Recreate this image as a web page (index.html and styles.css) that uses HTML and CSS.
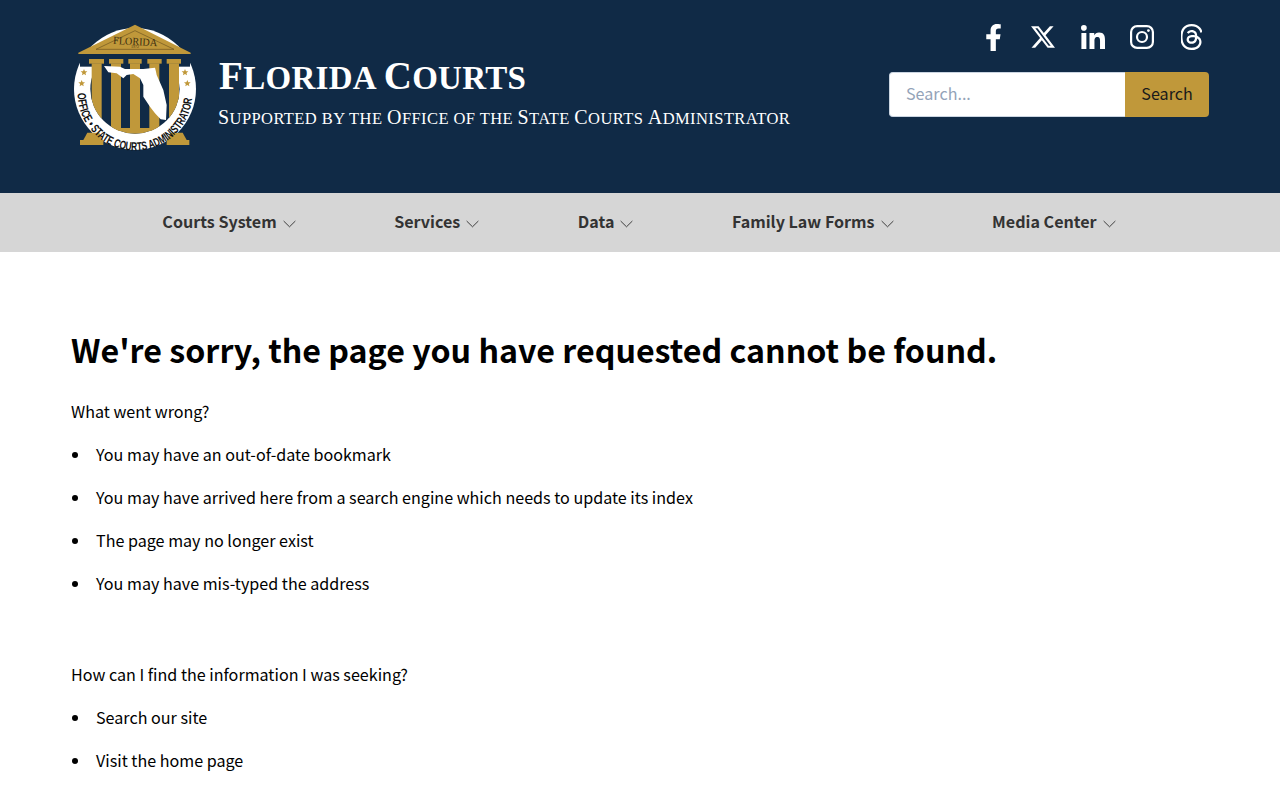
FILE: index.html
```html
<!DOCTYPE html>
<html lang="en">
<head>
  <meta charset="UTF-8" />
  <meta name="viewport" content="width=device-width, initial-scale=1.0" />
  <title>Florida Courts - Page Not Found</title>
  <link rel="stylesheet" href="styles.css">
</head>
<body>
  <header class="site-header">
    <div class="brand">
      <svg class="seal" viewBox="0 0 450 450" aria-hidden="true">
        <defs>
          <path id="seal-arc" d="M53 250 A172 172 0 0 0 397 250" />
          <clipPath id="seal-inner"><circle cx="225" cy="237" r="134" /><rect x="60" y="100" width="330" height="137" /></clipPath>
          <polygon id="seal-star" points="0,-10 2.900,-3.200 10,-3 4.500,1.700 6.200,9 0,5 -6.200,9 -4.500,1.700 -10,-3 -2.900,-3.200" />
        </defs>
        <circle cx="225" cy="237" r="183" fill="#fff" />
        <circle cx="225" cy="237" r="134" fill="#102a46" />
        <rect x="60" y="130" width="330" height="40" fill="#102a46" />
        <g fill="#c0983a">
          <polygon points="225,44 392,128 392,132 55,132 55,128" />
          <rect x="87" y="147" width="45" height="14" />
          <rect x="147" y="147" width="43" height="14" />
          <rect x="205" y="147" width="40" height="14" />
          <rect x="262" y="147" width="43" height="14" />
          <rect x="320" y="147" width="43" height="14" />
          <g clip-path="url(#seal-inner)">
            <rect x="95" y="160" width="30" height="170" />
            <rect x="153" y="160" width="30" height="205" />
            <rect x="210" y="160" width="30" height="210" />
            <rect x="268" y="160" width="30" height="205" />
            <rect x="327" y="160" width="30" height="170" />
            <rect x="120" y="354" width="210" height="20" />
          </g>
          <polygon points="82,368 118,368 128,390 70,390" />
          <polygon points="332,368 368,368 380,390 322,390" />
          <rect x="60" y="390" width="70" height="15" />
          <rect x="320" y="390" width="68" height="15" />
          <use href="#seal-star" x="72" y="187" />
          <use href="#seal-star" x="65" y="220" />
          <use href="#seal-star" x="375" y="187" />
          <use href="#seal-star" x="382" y="220" />
        </g>
        <polygon points="225,62 342,118 108,118" fill="none" stroke="#6b5320" stroke-width="2" />
        <text class="seal-name" x="225" y="105" text-anchor="middle" textLength="132" lengthAdjust="spacingAndGlyphs" transform="rotate(3 225 105)">FLORIDA</text>
        <text class="seal-year" x="225" y="115" text-anchor="middle">1972</text>
        <polygon points="132,168 180,170 195,177 250,177 285,173 288,185 290,195 310,240 320,285 318,330 302,328 285,310 270,290 250,260 250,225 240,205 220,192 200,195 190,205 170,190 145,187" fill="#fff" />
        <text class="seal-ring" textLength="525" lengthAdjust="spacingAndGlyphs"><textPath href="#seal-arc">OFFICE • STATE COURTS ADMINISTRATOR</textPath></text>
      </svg>
      <div class="brand-text">
        <div class="brand-title"><span>F</span>lorida <span>C</span>ourts</div>
        <div class="brand-sub"><span>S</span>upported by the <span>O</span>ffice of the <span>S</span>tate <span>C</span>ourts <span>A</span>dministrator</div>
      </div>
    </div>
    <div class="header-right">
      <div class="social">
        <a href="#" aria-label="Facebook">
          <svg class="ico-f" viewBox="0 0 320 512"><path d="M279.140 288l14.220-92.660h-88.910v-60.130c0-25.350 12.420-50.060 52.240-50.060h40.420V6.260S260.430 0 225.360 0c-73.220 0-121.080 44.380-121.080 124.720v70.620H22.890V288h81.390v224h100.170V288z" /></svg>
        </a>
        <a href="#" aria-label="X">
          <svg class="ico-x" viewBox="26 48 461 416"><path d="M389.200 48h70.600L305.600 224.200 487 464H345L233.700 318.600 106.500 464H35.800l164.900-188.500L26.800 48h145.600l100.500 132.900L389.200 48zm-24.800 373.800h39.100L151.100 88h-42L364.400 421.800z" /></svg>
        </a>
        <a href="#" aria-label="LinkedIn">
          <svg class="ico-in" viewBox="0 0 448 448"><path d="M100.280 448H7.400V148.900h92.880zM53.790 108.100C24.090 108.100 0 83.500 0 53.800a53.790 53.790 0 0 1 107.580 0c0 29.700-24.100 54.300-53.790 54.300zM447.900 448h-92.680V302.400c0-34.700-.7-79.200-48.290-79.200-48.290 0-55.690 37.700-55.690 76.700V448h-92.780V148.900h89.080v40.800h1.300c12.400-23.500 42.690-48.300 87.880-48.300 94 0 111.280 61.900 111.280 142.300V448z" /></svg>
        </a>
        <a href="#" aria-label="Instagram">
          <svg class="ico-ig" viewBox="0 0 24 24"><rect x="1.100" y="1.100" width="21.800" height="21.800" rx="6" /><circle cx="12" cy="12" r="5" /><circle class="dot" cx="18.400" cy="5.600" r="1.400" /></svg>
        </a>
        <a href="#" aria-label="Threads">
          <svg class="ico-th" viewBox="32 16 385 480"><path d="M331.500 235.700c2.200 .9 4.200 1.900 6.300 2.800 29.200 14.100 50.600 35.200 61.800 61.400 15.700 36.500 17.200 95.800-30.300 143.200-36.200 36.200-80.300 52.500-142.600 53h-.3c-70.200-.5-124.100-24.100-160.400-70.200-32.300-41-48.900-98.100-49.500-169.600V256v-.2C17 184.300 33.600 127.200 65.900 86.200 102.200 40.100 156.200 16.500 226.400 16h.3c70.300 .5 124.900 24 162.300 69.900 18.400 22.700 32 50 40.600 81.700l-40.400 10.800c-7.100-25.800-17.800-47.800-32.200-65.400-29.200-35.800-73-54.200-130.500-54.600-57 .5-100.100 18.800-128.200 54.400C72.100 146.100 58.500 194.300 58 256c.5 61.700 14.100 109.900 40.300 143.300 28 35.600 71.200 53.900 128.200 54.400 51.400-.4 85.400-12.600 113.700-40.900 32.300-32.200 31.700-71.800 21.400-95.900-6.100-14.200-17.100-26-31.900-34.900-3.700 26.900-11.800 48.300-24.700 64.800-17.100 21.800-41.400 33.600-72.700 35.300-23.600 1.300-46.300-4.400-63.900-16-20.800-13.800-33-34.800-34.300-59.300-2.500-48.300 35.700-83 95.200-86.400 21.100-1.200 40.900-.3 59.200 2.800-2.400-14.800-7.300-26.600-14.600-35.200-10-11.700-25.600-17.700-46.200-17.800H227c-16.600 0-39 4.600-53.300 26.300l-34.400-23.600c19.200-29.100 50.300-45.100 87.800-45.100h.8c62.600 .4 99.900 39.500 103.700 107.700l-.2 .2zm-156 68.800c1.300 25.100 28.400 36.800 54.600 35.300 25.600-1.400 54.600-11.400 59.500-73.200-13.200-2.900-27.800-4.400-43.400-4.400-4.800 0-9.600 .1-14.400 .4-42.900 2.400-57.200 23.200-56.200 41.800l.1 .1z" /></svg>
        </a>
      </div>
      <form class="search">
        <input type="text" placeholder="Search..." />
        <button type="button">Search</button>
      </form>
    </div>
  </header>

  <nav class="main-nav">
    <a href="#">Courts System <svg viewBox="0 0 14 8"><path d="M.7 .8 7 7l6.300-6.200" /></svg></a>
    <a href="#">Services <svg viewBox="0 0 14 8"><path d="M.7 .8 7 7l6.300-6.200" /></svg></a>
    <a href="#">Data <svg viewBox="0 0 14 8"><path d="M.7 .8 7 7l6.300-6.200" /></svg></a>
    <a href="#">Family Law Forms <svg viewBox="0 0 14 8"><path d="M.7 .8 7 7l6.300-6.200" /></svg></a>
    <a href="#">Media Center <svg viewBox="0 0 14 8"><path d="M.7 .8 7 7l6.300-6.200" /></svg></a>
  </nav>

  <main class="content">
    <h1>We're sorry, the page you have requested cannot be found.</h1>
    <p>What went wrong?</p>
    <ul>
      <li>You may have an out-of-date bookmark</li>
      <li>You may have arrived here from a search engine which needs to update its index</li>
      <li>The page may no longer exist</li>
      <li>You may have mis-typed the address</li>
    </ul>
    <p class="next">How can I find the information I was seeking?</p>
    <ul>
      <li>Search our site</li>
      <li>Visit the home page</li>
    </ul>
  </main>
</body>
</html>
```

FILE: styles.css
```css
* {
  box-sizing: border-box;
}
html, body {
  height: 800px;
  overflow: hidden;
}
body {
  margin: 0;
  background: #fff;
  color: #000;
  font-family: "Noto Sans CJK SC", "Noto Sans", sans-serif;
  font-size: 16.120px;
  line-height: 27px;
}
.site-header {
  background: #102a46;
  height: 193px;
  padding: 22px 71px 0 71px;
  display: flex;
  justify-content: space-between;
}
.brand {
  display: flex;
  align-items: flex-start;
}
.seal {
  width: 150px;
  height: 150px;
  margin: -12px 0 0 -11px;
  flex: none;
}
.seal-name {
  font: 32px "Liberation Serif", serif;
  fill: #3a2d10;
}
.seal-year {
  font: 12px "Liberation Serif", serif;
  fill: #3a2d10;
}
.seal-ring {
  font: 700 36px "Liberation Sans", sans-serif;
  fill: #111;
}
.brand-text {
  margin: 31px 0 0 9px;
  color: #fff;
  font-family: "Liberation Serif", serif;
  text-transform: uppercase;
}
.brand-title {
  font-size: 33px;
  line-height: 46px;
  font-weight: 700;
  letter-spacing: .3px;
}
.brand-title span {
  font-size: 39px;
}
.brand-sub {
  font-size: 16.500px;
  line-height: 28px;
  margin: 2px 0 0 -1px;
  letter-spacing: .42px;
}
.brand-sub span {
  font-size: 20px;
}
.header-right {
  display: flex;
  flex-direction: column;
  align-items: flex-end;
}
.social {
  display: flex;
  gap: 24.500px;
  height: 50px;
  margin: 2px 5px 0 0;
}
.social a {
  display: flex;
  width: 25px;
  height: 26px;
  justify-content: center;
  align-items: center;
}
.social svg {
  display: block;
  fill: #fff;
}
.ico-f {
  width: 17px;
  height: 27px;
}
.ico-x {
  width: 24px;
  height: 22px;
}
.ico-in {
  width: 24px;
  height: 24px;
}
.ico-ig {
  width: 24px;
  height: 24px;
  fill: none !important;
  stroke: #fff;
  stroke-width: 2.200;
}
.ico-ig .dot {
  fill: #fff;
  stroke: none;
}
.ico-th {
  width: 21px;
  height: 26px;
}
.search {
  display: flex;
  width: 320px;
  height: 45px;
  margin: -2px 0 0;
}
.search input {
  flex: 1;
  min-width: 0;
  border: 1px solid #cbd5e1;
  border-right: none;
  border-radius: 4px 0 0 4px;
  padding: 0 16px 2px;
  font: inherit;
  background: #fff;
}
.search input::placeholder {
  color: #94a3b8;
}
.search button {
  width: 84px;
  border: none;
  border-radius: 0 4px 4px 0;
  padding: 0 0 2px;
  background: #c0983a;
  color: #1a1a1a;
  font: inherit;
}
.main-nav {
  background: #d6d6d6;
  height: 59px;
  padding: 0 2px 2px 0;
  display: flex;
  justify-content: center;
  align-items: center;
}
.main-nav a {
  padding: 0 49.250px;
  color: #333;
  font-size: 16.100px;
  font-weight: 700;
  text-decoration: none;
  display: flex;
  align-items: center;
  gap: 6px;
}
.main-nav svg {
  width: 13px;
  height: 8px;
  margin-top: 4px;
  fill: none;
  stroke: #333;
  stroke-width: 1;
}
.content {
  padding: 73px 71px 0;
}
h1 {
  margin: 0 0 25px;
  font-size: 32.200px;
  line-height: 48px;
  font-weight: 700;
}
p {
  margin: 0 0 16px;
}
ul {
  margin: 0;
  padding: 0;
  list-style: none;
}
li {
  display: flex;
  margin-bottom: 16px;
}
li::before {
  content: "";
  flex: none;
  width: 6px;
  height: 6px;
  margin: 11px 18px 0 1px;
  border-radius: 50%;
  background: #000;
}
.next {
  margin-top: 64px;
}
```
